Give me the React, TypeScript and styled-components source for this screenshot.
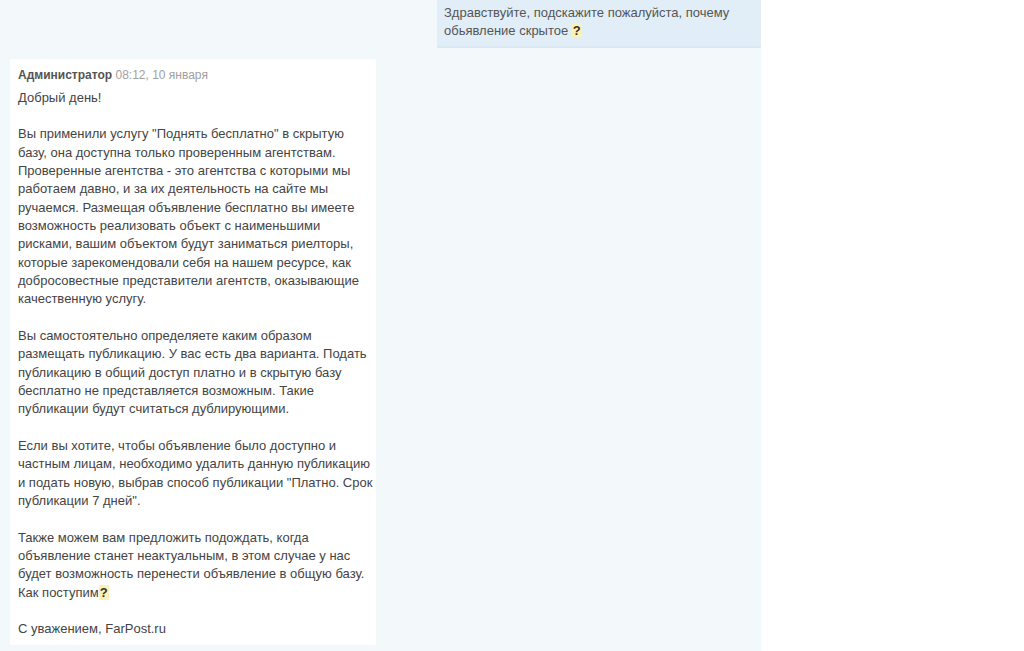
import styled, { createGlobalStyle } from 'styled-components';

const GlobalStyle = createGlobalStyle`
  html, body {
    margin: 0;
    padding: 0;
    background: #ffffff;
    font-family: "Liberation Sans", Arial, sans-serif;
  }
`;

const Page = styled.div`
  display: flex;
  width: 1024px;
  height: 651px;
  overflow: hidden;
  background: #ffffff;
`;

const Thread = styled.section`
  display: flex;
  flex-direction: column;
  width: 751px;
  padding-left: 10px;
  gap: 11px;
  background: #f3f8fb;
  align-items: flex-start;
`;

const Outgoing = styled.div`
  align-self: flex-end;
  box-sizing: border-box;
  width: 324px;
  padding: 4px 7px 5px;
  background: #e1eef8;
  border-bottom: 2px solid #dbe8f3;
  color: #555;
  font-size: 13px;
  line-height: 18.4px;
`;

const Incoming = styled.article`
  box-sizing: border-box;
  width: 366px;
  padding: 8px 2px 6px 8px;
  background: #ffffff;
  color: #444;
  font-size: 13px;
  line-height: 18.33px;
`;

const Meta = styled.div`
  font-size: 12px;
  line-height: 16px;
  margin-bottom: 6px;
`;

const Author = styled.span`
  font-weight: bold;
  color: #555;
`;

const Time = styled.span`
  color: #a0a0a0;
`;

const Para = styled.p<{ $last?: boolean }>`
  margin: 0 0 ${(p) => (p.$last ? '0' : '18.33px')};
`;

const Ask = styled.span`
  font-weight: bold;
  color: #333;
  background: #fbf1b4;
  padding: 0 1px;
`;

export default function App() {
  return (
    <Page>
      <GlobalStyle />
      <Thread>
        <Outgoing>
          Здравствуйте, подскажите пожалуйста, почему обьявление скрытое <Ask>?</Ask>
        </Outgoing>
        <Incoming>
          <Meta>
            <Author>Администратор</Author> <Time>08:12, 10 января</Time>
          </Meta>
          <Para>Добрый день!</Para>
          <Para>
            Вы применили услугу "Поднять бесплатно" в скрытую базу, она доступна только
            проверенным агентствам. Проверенные агентства - это агентства с которыми мы
            работаем давно, и за их деятельность на сайте мы ручаемся. Размещая объявление
            бесплатно вы имеете возможность реализовать объект с наименьшими рисками, вашим
            объектом будут заниматься риелторы, которые зарекомендовали себя на нашем
            ресурсе, как добросовестные представители агентств, оказывающие качественную
            услугу.
          </Para>
          <Para>
            Вы самостоятельно определяете каким образом размещать публикацию. У вас есть два
            варианта. Подать публикацию в общий доступ платно и в скрытую базу бесплатно не
            представляется возможным. Такие публикации будут считаться дублирующими.
          </Para>
          <Para>
            Если вы хотите, чтобы объявление было доступно и частным лицам, необходимо
            удалить данную публикацию и подать новую, выбрав способ публикации "Платно. Срок
            публикации 7 дней".
          </Para>
          <Para>
            Также можем вам предложить подождать, когда объявление станет неактуальным, в
            этом случае у нас будет возможность перенести объявление в общую базу. Как
            поступим<Ask>?</Ask>
          </Para>
          <Para $last>С уважением, FarPost.ru</Para>
        </Incoming>
      </Thread>
    </Page>
  );
}
